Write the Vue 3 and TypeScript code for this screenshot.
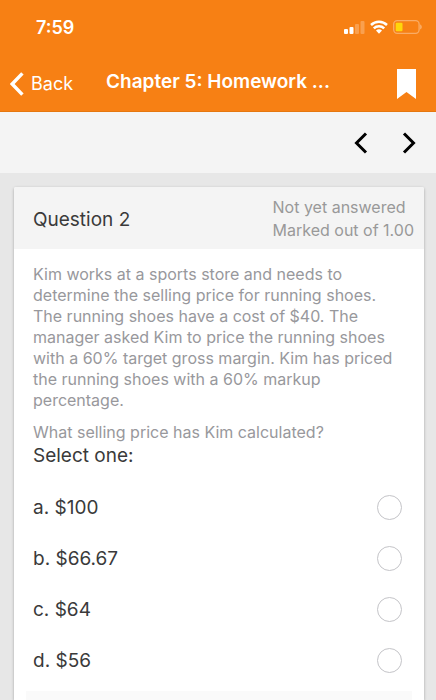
<script setup lang="ts">
import { ref } from 'vue'

interface Option {
  id: string
  label: string
}

const options: Option[] = [
  { id: 'a', label: 'a. $100' },
  { id: 'b', label: 'b. $66.67' },
  { id: 'c', label: 'c. $64' },
  { id: 'd', label: 'd. $56' },
]

const selected = ref<string>('')
</script>

<template>
  <div class="screen">
    <header class="top">
      <div class="status">
        <span class="time">7:59</span>
        <div class="indicators">
          <svg width="21" height="14" viewBox="0 0 21 14" aria-hidden="true">
            <rect x="0" y="9" width="4" height="5" rx="1" fill="#fff" />
            <rect x="5.5" y="7" width="4" height="7" rx="1" fill="#fff" />
            <rect x="11" y="4" width="4" height="10" rx="1" fill="#fff" opacity="0.25" />
            <rect x="16.5" y="1" width="4" height="13" rx="1" fill="#fff" opacity="0.25" />
          </svg>
          <svg width="18" height="14" viewBox="0 0 18 14" aria-hidden="true">
            <g fill="none" stroke="#fff" stroke-width="2.5">
              <path d="M1 5A11.6 11.6 0 0 1 17 5" />
              <path d="M3.8 8.4A7.4 7.4 0 0 1 14.2 8.4" />
            </g>
            <path d="M6 10.6A4.4 4.4 0 0 1 12 10.6L9 13.8Z" fill="#fff" />
          </svg>
          <svg width="29" height="14" viewBox="0 0 29 14" aria-hidden="true">
            <rect x="0.7" y="0.7" width="25.4" height="12.6" rx="3.5" fill="none" stroke="#fff" stroke-width="1.3" opacity="0.35" />
            <rect x="2.7" y="2.7" width="6.8" height="8.6" rx="1" fill="#ffd60a" />
            <path d="M27.2 4.6C29.2 5.2 29.2 8.8 27.2 9.4Z" fill="#fff" opacity="0.4" />
          </svg>
        </div>
      </div>
      <div class="bar">
        <button class="back" type="button">
          <svg width="14" height="24" viewBox="0 0 14 24" aria-hidden="true">
            <path d="M12.4 1.3L2.2 12L12.4 22.7" fill="none" stroke="#fff" stroke-width="3.4" />
          </svg>
          <span>Back</span>
        </button>
        <h1>Chapter 5: Homework ...</h1>
        <button class="bookmark" type="button" aria-label="Bookmark">
          <svg width="19" height="30" viewBox="0 0 19 30" aria-hidden="true">
            <path d="M0 0H19V30L9.5 23L0 30Z" fill="#fff" />
          </svg>
        </button>
      </div>
    </header>

    <nav class="pager">
      <button type="button" aria-label="Previous question">
        <svg width="14" height="22" viewBox="0 0 14 22" aria-hidden="true">
          <path d="M12 1.5L2.5 11L12 20.5" />
        </svg>
      </button>
      <button type="button" aria-label="Next question">
        <svg width="14" height="22" viewBox="0 0 14 22" aria-hidden="true">
          <path d="M2 1.5L11.5 11L2 20.5" />
        </svg>
      </button>
    </nav>

    <main class="content">
      <section class="card">
        <div class="card-head">
          <h2>Question 2</h2>
          <div class="state">
            <div>Not yet answered</div>
            <div>Marked out of 1.00</div>
          </div>
        </div>
        <div class="question">
          <p>
            Kim works at a sports store and needs to determine the selling price for running
            shoes. The running shoes have a cost of $40. The manager asked Kim to price the
            running shoes with a 60% target gross margin. Kim has priced the running shoes
            with a 60% markup percentage.
          </p>
          <p>What selling price has Kim calculated?</p>
        </div>
        <fieldset class="answers">
          <legend>Select one:</legend>
          <label v-for="option in options" :key="option.id" class="option">
            <span>{{ option.label }}</span>
            <input v-model="selected" type="radio" name="answer" :value="option.id" />
          </label>
        </fieldset>
        <div class="card-foot"></div>
      </section>
    </main>
  </div>
</template>

<style>
body {
  margin: 0;
  background: #e7e7e7;
}
</style>

<style scoped>
.screen {
  display: flex;
  flex-direction: column;
  min-height: 100vh;
  font-family: Inter, "Liberation Sans", sans-serif;
  color: #3a3a3a;
}

button {
  display: flex;
  align-items: center;
  padding: 0;
  border: 0;
  background: none;
  font: inherit;
  color: inherit;
  cursor: pointer;
}

h1,
h2,
p {
  margin: 0;
}

svg {
  display: block;
}

.top {
  box-sizing: border-box;
  background: #f78014;
  border-bottom: 1px solid #e5770f;
  color: #fff;
}

.status {
  display: flex;
  align-items: center;
  justify-content: space-between;
  height: 54px;
  padding: 0 14px 0 36px;
}

.time {
  font-size: 18px;
  font-weight: 600;
}

.indicators {
  display: flex;
  align-items: center;
  gap: 5px;
}

.bar {
  display: flex;
  align-items: center;
  box-sizing: border-box;
  height: 57px;
  padding: 2px 20px 0 10px;
}

.back {
  gap: 7px;
  font-size: 18px;
}

.bar h1 {
  flex: 1;
  margin-left: 33px;
  padding-bottom: 4px;
  font-size: 19px;
  font-weight: 600;
  line-height: 24px;
  white-space: nowrap;
}

.pager {
  display: flex;
  align-items: center;
  justify-content: flex-end;
  gap: 34px;
  height: 61px;
  padding: 0 20px;
  background: #f4f4f4;
}

.pager path {
  fill: none;
  stroke: #000;
  stroke-width: 3;
}

.content {
  display: flex;
  flex: 1;
  padding: 14px 12px 0 14px;
}

.card {
  display: flex;
  flex: 1;
  flex-direction: column;
  background: #fff;
  border-radius: 2px 2px 0 0;
  box-shadow: 0 1px 3px rgba(0, 0, 0, 0.3);
}

.card-head {
  display: flex;
  align-items: center;
  justify-content: space-between;
  box-sizing: border-box;
  height: 62px;
  padding: 2px 10px 0 19px;
  background: #f4f4f4;
  border-radius: 2px 2px 0 0;
}

.card-head h2 {
  font-size: 19px;
  font-weight: 400;
}

.state {
  font-size: 16px;
  line-height: 23px;
  color: #999;
}

.question {
  display: flex;
  flex-direction: column;
  gap: 11px;
  padding: 15px 30px 0 19px;
  font-size: 16px;
  line-height: 21px;
  color: #98989c;
}

.answers {
  display: flex;
  flex-direction: column;
  min-width: 0;
  margin: 0;
  padding: 0 22px 0 19px;
  border: 0;
}

.answers legend {
  padding: 0 0 13px;
  font-size: 19px;
  line-height: 26px;
}

.option {
  display: flex;
  align-items: center;
  justify-content: space-between;
  height: 51px;
  font-size: 19px;
  cursor: pointer;
}

.option input {
  appearance: none;
  box-sizing: border-box;
  width: 25px;
  height: 25px;
  margin: 0;
  border: 1px solid #c4c4c8;
  border-radius: 50%;
  background: #fff;
  cursor: pointer;
}

.option input:checked {
  border: 7px solid #f78014;
}

.card-foot {
  flex: 1;
  margin: 5px 12px 0;
  background: #fafafa;
}
</style>
